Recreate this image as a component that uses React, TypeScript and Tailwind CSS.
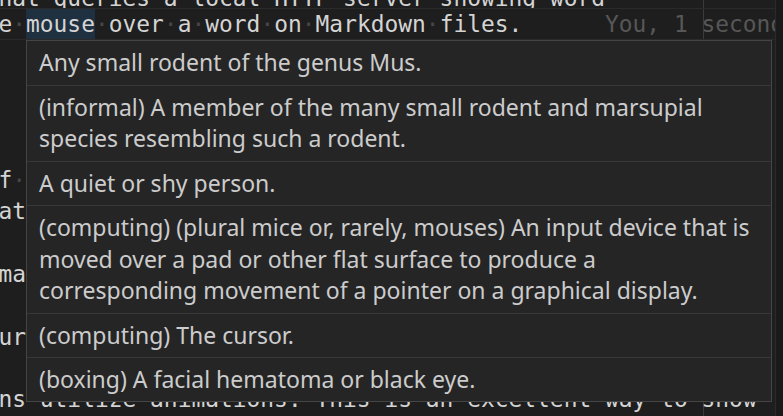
import React from "react";

const mono = { fontFamily: '"DejaVu Sans Mono", "Liberation Mono", monospace' };
const sans = { fontFamily: '"Noto Sans", "Open Sans", sans-serif' };

// Spaces are drawn as faint middle dots, like renderWhitespace: "all"
function Ws({ text }: { text: string }) {
  const parts = text.split(" ");
  return (
    <>
      {parts.map((p, i) => (
        <React.Fragment key={i}>
          {i > 0 && <span className="text-[#474747]">·</span>}
          {p}
        </React.Fragment>
      ))}
    </>
  );
}

const lines = [
  "",
  "",
  "",
  "",
  "f the word",
  "at is hovered",
  "",
  "ma",
  "",
  "ur",
  "",
  "ns utilize animations. This is an excellent way to show",
];

const definitions = [
  ["Any small rodent of the genus Mus."],
  [
    "(informal) A member of the many small rodent and marsupial",
    "species resembling such a rodent.",
  ],
  ["A quiet or shy person."],
  [
    "(computing) (plural mice or, rarely, mouses) An input device that is",
    "moved over a pad or other flat surface to produce a",
    "corresponding movement of a pointer on a graphical display.",
  ],
  ["(computing) The cursor."],
  ["(boxing) A facial hematoma or black eye."],
];

export default function App() {
  return (
    <div className="flex h-[416px] w-[783px] overflow-hidden bg-[#1e1e1e]">
      <div
        className="relative flex-1 overflow-hidden text-[22.9px] text-[#d4d4d4] whitespace-pre"
        style={mono}
      >
        {/* ruler */}
        <div className="absolute left-[703px] top-0 h-full w-px bg-[#3a3a3a]" />

        <div className="relative -ml-[1.6px]">
          {/* line scrolled mostly out of view */}
          <div className="h-[8px] overflow-hidden">
            <div className="-mt-[17.5px] leading-[31.3px]">
              <Ws text="hat queries a local HTTP server showing word" />
            </div>
          </div>

          {/* current line */}
          <div className="box-border h-[32px] border-y border-[#2a2a2a] leading-[30px]">
            <span>e</span>
            <span className="text-[#474747]">·</span>
            <span className="inline-block bg-[#1f3041] leading-[30px]">mouse</span>
            <Ws text=" over a word on Markdown files." />
            <span className="text-[#575757]">{"      You, 1 second ago"}</span>
          </div>

          {lines.map((l, i) => (
            <div key={i} className="h-[31.3px] leading-[31.3px]">
              <Ws text={l} />
            </div>
          ))}
        </div>

        {/* hover widget */}
        <div
          className="absolute left-[26px] top-[40px] box-border h-[362px] w-[746px] overflow-hidden border border-[#454545] bg-[#252526] text-[23px] leading-[31.5px] text-[#cccccc] whitespace-nowrap"
          style={sans}
        >
          {definitions.map((d, i) => (
            <div
              key={i}
              className={`px-[12px] py-[6px] ${i > 0 ? "border-t border-[#383838]" : ""}`}
            >
              {d.map((t, j) => (
                <div key={j}>{t}</div>
              ))}
            </div>
          ))}
        </div>
      </div>

      {/* scrollbar track */}
      <div className="w-[8px] border-l border-[#2a2a2a] bg-[#1a1a1a]" />
    </div>
  );
}
